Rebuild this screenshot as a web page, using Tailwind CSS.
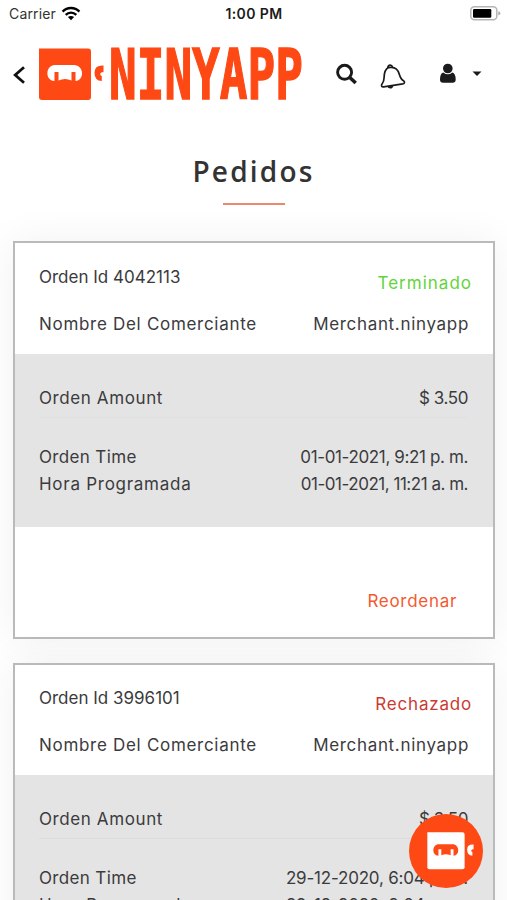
<!DOCTYPE html>
<html lang="es">
<head>
<meta charset="utf-8">
<title>Pedidos</title>
<script src="https://cdn.jsdelivr.net/npm/@tailwindcss/browser@4"></script>
</head>
<body class="bg-white">
<div class="relative flex flex-col w-[507px] h-[900px] overflow-hidden bg-white font-['Inter',sans-serif] text-[#3b3b3d]">

  <!-- Status bar -->
  <div class="grid grid-cols-3 items-center h-[28px] shrink-0 pl-[9px] pr-[6px] text-[#1b1b1b]">
    <div class="flex items-center gap-[6px]">
      <span class="text-[14px] leading-[28px] tracking-[0.15px] text-[#333]">Carrier</span>
      <svg class="mb-[2px] -ml-px" width="20" height="15" viewBox="0 0 20 15" fill="none" stroke="#000" stroke-width="2.4"><path d="M1.6 5.6C6.300 .8 13.700 .8 18.400 5.600M4.700 8.800C7.700 5.900 12.300 5.900 15.300 8.800"/><path d="M10 14.300L6.900 11.100C8.600 9.500 11.400 9.500 13.100 11.100Z" fill="#000" stroke="none"/></svg>
    </div>
    <div class="text-center pr-[2px] text-[14px] leading-[28px] font-semibold tracking-[0.400px]">1:00 PM</div>
    <div class="flex justify-end">
      <svg class="mb-px" width="31" height="15" viewBox="0 0 31 15"><rect x=".8" y=".8" width="26" height="13" rx="3.500" fill="#fff" stroke="#b5b5b5" stroke-width="1.500"/><rect x="3" y="3" width="18.300" height="8.800" rx="1.200" fill="#000"/><path d="M28.300 5.200Q30.300 5.700 30.300 7.300T28.300 9.500Z" fill="#aaa"/></svg>
    </div>
  </div>

  <!-- Navigation -->
  <header class="flex h-[92px] shrink-0 pt-[19px] pl-[12px]">
    <svg class="mt-[19px] shrink-0" width="14" height="18" viewBox="0 0 14 18" fill="none" stroke="#111" stroke-width="2.800"><path d="M12 1.200L3.200 9L12 16.800"/></svg>
    <svg class="ml-[13px] mt-[1px] shrink-0" width="66" height="53" viewBox="0 0 66 53"><path d="M0 .5H49Q52 .5 52 3.500V49Q52 52 49 52H3Q0 52 0 49Z" fill="#fe4914"/><path d="M16 17H35C45 17 46 32.500 36.500 33V24H32.500V32.500Q26 29.500 19.500 32.500V24H15.500V33C5.500 32.500 6.500 17 16 17Z" fill="#fff"/><path d="M64.500 17.500Q55.500 17 55.500 24.500Q55.500 33 62.800 33V28Q61 27.500 61.200 25.800Q61.500 24 64.500 24Z" fill="#fe4914"/></svg>
    <div class="w-[197px] h-[54px] ml-[4px] mt-[1px] flex items-center shrink-0">
      <span class="block origin-center scale-y-[1.490] whitespace-nowrap font-['DejaVu_Sans_Mono',monospace] font-bold text-[46px] leading-[54px] text-[#fe4914] [-webkit-text-stroke:1px_#fe4914]">NINYAPP</span>
    </div>
    <svg class="ml-[30px] mt-[16px] shrink-0" width="22" height="22" viewBox="0 0 22 22" fill="none" stroke="#1a1a1a"><circle cx="8.600" cy="9.300" r="7" stroke-width="2.900"/><path d="M13.800 14.500L19.700 20" stroke-width="3.600"/></svg>
    <svg class="ml-[22px] mt-[16px] shrink-0" width="26" height="27" viewBox="0 0 26 27" fill="none" stroke="#1a1a1a" stroke-width="1.700" stroke-linejoin="round"><path d="M8.500 4.600C5 6.300 4.200 10 4.100 14.500C4 18.500 2.900 19.600 1.900 21.200C1 23 1.700 24 3.600 23.800L22.800 20.900C24.800 20.400 25 18.800 23.500 17.800C20.800 16.300 20.300 14.800 19.300 11.300C18.200 7.200 15.500 4.300 11.500 4.300Q9.800 4.200 8.500 4.600Z"/><path d="M7.800 5Q8 2.200 10.200 2.200Q12 2.200 12.700 4.500"/><path d="M7.300 23.600L13.300 22.700Q13 25.500 10.300 25.500Q8 25.500 7.300 23.600Z" fill="#1a1a1a" stroke="none"/></svg>
    <svg class="ml-[33px] mt-[16px] shrink-0" width="18" height="21" viewBox="0 0 18 21" fill="#1b1b1d"><circle cx="8.800" cy="5.500" r="4.800"/><path d="M4.300 9.400Q8.800 13.200 13.300 9.400Q16.700 10.500 16.700 16.500Q16.700 19.800 13.500 19.800H4.100Q1 19.800 1 16.500Q1 10.500 4.300 9.400Z"/></svg>
    <svg class="ml-[15px] mt-[24px] shrink-0" width="10" height="6" viewBox="0 0 10 6"><path d="M.5 .5H9.500L5 5Z" fill="#1b1b1b"/></svg>
  </header>

  <!-- Page title -->
  <div class="flex flex-col items-center h-[121px] shrink-0 pt-[31px]">
    <h1 class="text-[28px] leading-[40px] font-semibold font-['Open_Sans',sans-serif] tracking-[2.200px] text-[#333]">Pedidos</h1>
    <div class="w-[62px] h-[2px] mt-[12px] bg-[#e98a70]"></div>
  </div>

  <!-- Orders -->
  <main class="flex flex-col gap-[24px] mx-[13px] mr-[12px] text-[17px] leading-[27px] whitespace-nowrap">
    <article class="h-[398px] shrink-0 border-2 border-[#b9baba] bg-white shadow-[0_0_40px_rgba(0,0,0,0.06)]">
      <div class="h-[111px] pt-[21px] pl-[24px] pr-[22px]">
        <div class="flex justify-between h-[47px]"><span>Orden Id 4042113</span><span class="pt-[6px] -mr-px tracking-[1px] text-[#63d43c]">Terminado</span></div>
        <div class="flex justify-between pr-[2px]"><span class="tracking-[0.700px]">Nombre Del Comerciante</span><span class="tracking-[0.680px]">Merchant.ninyapp</span></div>
      </div>
      <div class="h-[173px] bg-[#e4e4e4] pt-[31px] pl-[24px] pr-[25px]">
        <div class="flex justify-between h-[33px] border-b border-[#e0e0e0]"><span class="tracking-[0.600px]">Orden Amount</span><span class="tracking-[-0.400px]">$ 3.50</span></div>
        <div class="flex justify-between pt-[26px]"><span class="tracking-[0.350px]">Orden Time</span><span class="tracking-[-0.370px]">01-01-2021, 9:21 p. m.</span></div>
        <div class="flex justify-between"><span class="tracking-[0.730px]">Hora Programada</span><span class="tracking-[-0.480px]">01-01-2021, 11:21 a. m.</span></div>
      </div>
      <div class="flex justify-end pt-[61px] pr-[36px] text-[#f4592f]"><span class="tracking-[0.700px]">Reordenar</span></div>
    </article>

    <article class="h-[398px] shrink-0 border-2 border-[#b9baba] bg-white shadow-[0_0_40px_rgba(0,0,0,0.06)]">
      <div class="h-[110px] pt-[20px] pl-[24px] pr-[22px]">
        <div class="flex justify-between h-[47px]"><span>Orden Id 3996101</span><span class="pt-[6px] -mr-px tracking-[0.800px] text-[#cb3a32]">Rechazado</span></div>
        <div class="flex justify-between pr-[2px]"><span class="tracking-[0.700px]">Nombre Del Comerciante</span><span class="tracking-[0.680px]">Merchant.ninyapp</span></div>
      </div>
      <div class="h-[173px] bg-[#e4e4e4] pt-[31px] pl-[24px] pr-[25px]">
        <div class="flex justify-between h-[33px] border-b border-[#dcdcdc]"><span class="tracking-[0.600px]">Orden Amount</span><span class="tracking-[-0.400px]">$ 3.50</span></div>
        <div class="flex justify-between pt-[26px]"><span class="tracking-[0.350px]">Orden Time</span><span class="tracking-[-0.200px]">29-12-2020, 6:04 p. m.</span></div>
        <div class="flex justify-between"><span class="tracking-[0.730px]">Hora Programada</span><span class="tracking-[-0.200px]">29-12-2020, 8:04 p. m.</span></div>
      </div>
    </article>
  </main>

  <!-- Floating assistant button -->
  <button class="absolute left-[409px] top-[814px] w-[74px] h-[74px] rounded-full bg-[#fe4914] flex items-center pl-[18px]" aria-label="Chat">
    <svg width="48" height="38" viewBox="0 0 66 53"><path d="M0 .5H49Q52 .5 52 3.500V49Q52 52 49 52H3Q0 52 0 49Z" fill="#fff"/><path d="M16 17H35C45 17 46 32.500 36.500 33V24H32.500V32.500Q26 29.500 19.500 32.500V24H15.500V33C5.500 32.500 6.500 17 16 17Z" fill="#fe4914"/><path d="M64.500 17.500Q55.500 17 55.500 24.500Q55.500 33 62.800 33V28Q61 27.500 61.200 25.800Q61.500 24 64.500 24Z" fill="#fff"/></svg>
  </button>
</div>
</body>
</html>
